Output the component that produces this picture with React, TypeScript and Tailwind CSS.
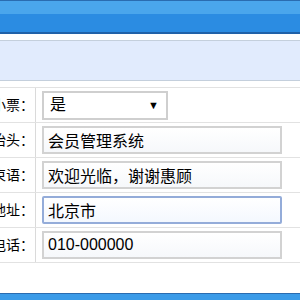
import { useState } from 'react'

const rows = [
  { label: '打印小票：', kind: 'select', value: '是' },
  { label: '小票抬头：', kind: 'text', value: '会员管理系统' },
  { label: '小票结束语：', kind: 'text', value: '欢迎光临，谢谢惠顾' },
  { label: '联系地址：', kind: 'text', value: '北京市', focus: true },
  { label: '联系电话：', kind: 'text', value: '010-000000' },
]

export default function App() {
  const [values, setValues] = useState(rows.map((r) => r.value))

  return (
    <div className="flex h-[300px] flex-col overflow-hidden bg-white font-['Liberation_Sans','Noto_Sans_CJK_SC',sans-serif] text-black">
      {/* Title bar */}
      <div className="flex h-[34px] flex-col border-t border-[#2a6cb0]">
        <div className="h-[13px] bg-[#4aa6ec]" />
        <div className="flex-1 bg-[#2b8ce2]" />
        <div className="h-[2px] bg-[#2061a8]" />
      </div>

      {/* Toolbar panel */}
      <div className="mt-[6px] h-[41px] border-y border-[#c4cfdc] bg-[#e1ebfd]" />

      {/* Form table */}
      <div className="mt-[6px] border-t border-[#e2e2e2]">
        {rows.map((row, i) => (
          <div key={row.label} className="flex h-[35px] border-b border-[#e2e2e2]">
            <div className="flex w-[36px] shrink-0 items-center justify-end overflow-hidden whitespace-nowrap border-r border-[#dadada] pr-px text-[14px]">
              {row.label}
            </div>
            <div className="flex flex-1 items-center pl-[6px]">
              {row.kind === 'select' ? (
                <div className="flex h-[29px] w-[126px] items-center justify-between border-2 border-[#cfcfcf] bg-white pl-[6px] pr-[7px] text-[16px]">
                  <span>{values[i]}</span>
                  <span className="text-[11px]">▼</span>
                </div>
              ) : (
                <input
                  value={values[i]}
                  autoFocus={row.focus}
                  onChange={(e) => {
                    const next = [...values]
                    next[i] = e.target.value
                    setValues(next)
                  }}
                  className={
                    row.focus
                      ? 'h-[28px] w-[240px] rounded-[2px] border-2 border-[#94acd9] bg-gradient-to-b from-white to-[#f4f8fe] px-[4px] text-[16px] caret-black outline-none'
                      : 'h-[28px] w-[240px] border-2 border-[#d2d2d2] bg-gradient-to-b from-white to-[#f6f8fb] px-[4px] text-[16px] outline-none'
                  }
                />
              )}
            </div>
          </div>
        ))}
      </div>

      {/* Bottom bar */}
      <div className="mt-auto h-[7px] border-t border-[#2a6cb0] bg-[#3b9be8]" />
    </div>
  )
}
